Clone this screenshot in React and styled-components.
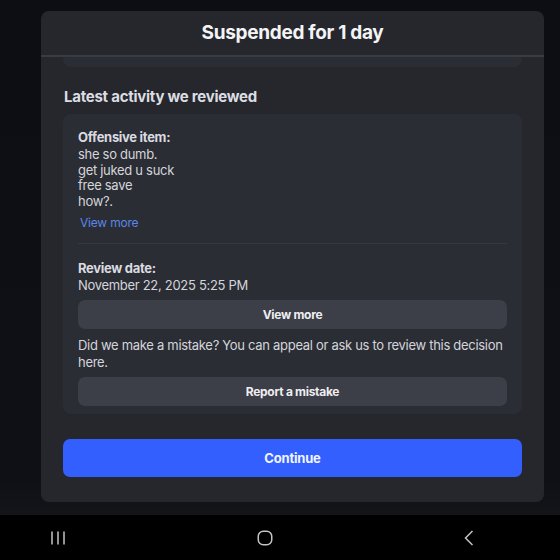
import React from "react";
import styled, { createGlobalStyle } from "styled-components";

const Global = createGlobalStyle`
  html, body { margin: 0; padding: 0; background: #0d0e13; }
  body { font-family: Inter, "Noto Sans", sans-serif; -webkit-font-smoothing: antialiased; }
  * { box-sizing: border-box; }
`;

const Page = styled.div`
  width: 560px;
  height: 560px;
  display: flex;
  flex-direction: column;
  overflow: hidden;
`;

const Stage = styled.div`
  flex: 1;
  padding: 11px 16px 0 41px;
  background: linear-gradient(#0d0e13 0, #0f1015 480px, #141519 100%);
`;

const Modal = styled.div`
  width: 503px;
  height: 491px;
  background: #25272d;
  border-radius: 8px;
  display: flex;
  flex-direction: column;
  overflow: hidden;
`;

const Header = styled.div`
  height: 46px;
  flex-shrink: 0;
  display: flex;
  align-items: center;
  justify-content: center;
  border-bottom: 2px solid #393b43;
  padding-bottom: 1px;
`;

const Title = styled.h1`
  margin: 0;
  font-size: 19px;
  font-weight: 700;
  color: #f4f4f6;
  letter-spacing: -0.3px;
`;

const Body = styled.div`
  flex: 1;
  padding: 0 22px 25px 22px;
  display: flex;
  flex-direction: column;
`;

const CardTail = styled.div`
  height: 10px;
  flex-shrink: 0;
  background: #2b2d34;
  border-radius: 0 0 8px 8px;
`;

const SectionHeading = styled.h2`
  margin: 20px 0 7px 1px;
  font-size: 15px;
  line-height: 20px;
  font-weight: 700;
  color: #dcdde2;
  letter-spacing: -0.25px;
`;

const Card = styled.div`
  background: #2b2d34;
  border-radius: 8px;
  padding: 15px 15px 8px 15px;
  display: flex;
  flex-direction: column;
`;

const Label = styled.div`
  font-size: 13px;
  line-height: 16px;
  font-weight: 700;
  color: #dadbe0;
  letter-spacing: -0.3px;
  margin-top: ${(p) => p.$mt || 0}px;
`;

const Lines = styled.div`
  margin-top: 2px;
  font-size: 13px;
  line-height: 15.5px;
  color: #d4d5da;
  letter-spacing: -0.3px;
`;

const Text = styled.div`
  font-size: 13px;
  line-height: ${(p) => p.$lh || 16}px;
  color: #d4d5da;
  letter-spacing: -0.3px;
  margin-top: ${(p) => p.$mt || 0}px;
`;

const Link = styled.a`
  display: block;
  margin-top: 6px;
  padding-left: 2px;
  font-size: 12px;
  line-height: 16px;
  color: #5a86e8;
  letter-spacing: -0.2px;
  text-decoration: none;
`;

const Divider = styled.hr`
  margin: 12px 0 0 0;
  border: 0;
  height: 1px;
  background: #363840;
`;

const GrayButton = styled.button`
  margin-top: ${(p) => p.$mt || 0}px;
  height: 29px;
  border: 0;
  border-radius: 7px;
  background: #3c3e48;
  color: #eeeef1;
  font-family: inherit;
  font-size: 12px;
  font-weight: 700;
  letter-spacing: -0.3px;
  cursor: pointer;
`;

const PrimaryButton = styled.button`
  margin-top: 25px;
  height: 38px;
  flex-shrink: 0;
  border: 0;
  border-radius: 7px;
  background: #335fff;
  color: #f2f4ff;
  font-family: inherit;
  font-size: 13px;
  font-weight: 700;
  letter-spacing: -0.2px;
  cursor: pointer;
`;

const NavBar = styled.nav`
  height: 45px;
  flex-shrink: 0;
  background: #000;
  display: flex;
  align-items: center;
  justify-content: space-between;
  padding: 0 86px 0 51px;
`;

const NavIcon = styled.svg`
  display: block;
  stroke: #c4c4c6;
  fill: none;
  stroke-width: 1.5;
`;

export default function App() {
  return (
    <Page>
      <Global />
      <Stage>
        <Modal>
          <Header>
            <Title>Suspended for 1 day</Title>
          </Header>
          <Body>
            <CardTail />
            <SectionHeading>Latest activity we reviewed</SectionHeading>
            <Card>
              <Label>Offensive item:</Label>
              <Lines>
                she so dumb.
                <br />
                get juked u suck
                <br />
                free save
                <br />
                how?.
              </Lines>
              <Link href="#">View more</Link>
              <Divider />
              <Label $mt={16}>Review date:</Label>
              <Text $mt={1}>November 22, 2025 5:25 PM</Text>
              <GrayButton $mt={7}>View more</GrayButton>
              <Text $mt={8} $lh={17}>
                Did we make a mistake? You can appeal or ask us to review this decision here.
              </Text>
              <GrayButton $mt={6}>Report a mistake</GrayButton>
            </Card>
            <PrimaryButton>Continue</PrimaryButton>
          </Body>
        </Modal>
      </Stage>
      <NavBar>
        <NavIcon width="14" height="14" viewBox="0 0 14 14">
          <path d="M1 0.5V13.5M7 0.5V13.5M13 0.5V13.5" />
        </NavIcon>
        <NavIcon width="16" height="16" viewBox="0 0 16 16">
          <rect x="1.25" y="1.25" width="13.5" height="13.5" rx="5" />
        </NavIcon>
        <NavIcon width="10" height="16" viewBox="0 0 10 16">
          <path d="M8.5 1L1.5 8L8.5 15" />
        </NavIcon>
      </NavBar>
    </Page>
  );
}
